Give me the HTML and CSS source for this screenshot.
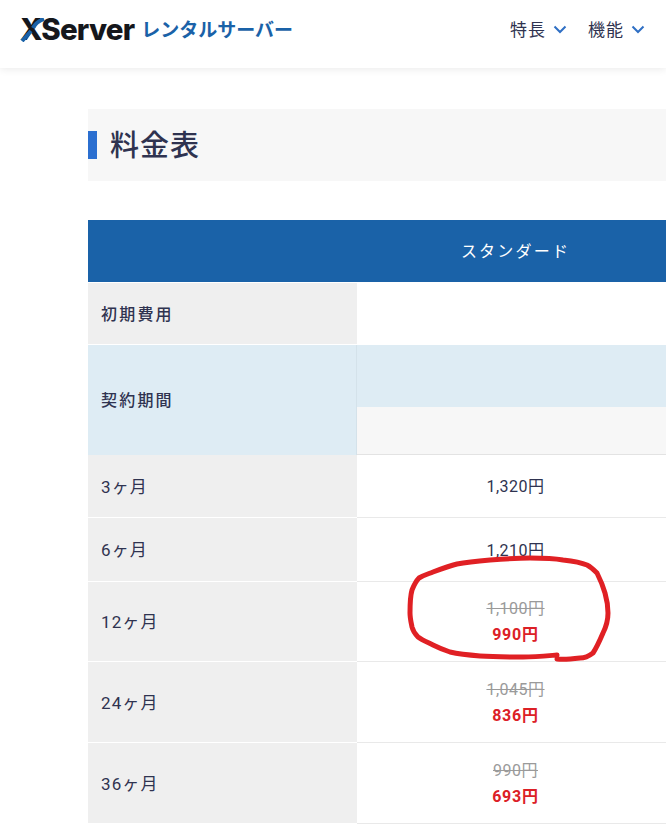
FILE: index.html
```
<!DOCTYPE html>
<html lang="ja">
<head>
<meta charset="utf-8">
<title>料金表</title>
<link rel="stylesheet" href="styles.css">
</head>
<body>
<header class="site-header">
  <a class="logo">
    <span class="logo-mark">XServer<svg class="logo-x" viewBox="0 0 24 24" aria-hidden="true"><path d="M1 23 L10 13" /><path d="M12 10 Q15 4 23 1" /></svg></span>
    <span class="logo-sub">レンタルサーバー</span>
  </a>
  <nav class="nav">
    <span class="nav-item">特長<svg class="chev" viewBox="0 0 14 9" aria-hidden="true"><path d="M1.5 1.5 L7 7 L12.5 1.5"/></svg></span>
    <span class="nav-item">機能<svg class="chev" viewBox="0 0 14 9" aria-hidden="true"><path d="M1.5 1.5 L7 7 L12.5 1.5"/></svg></span>
  </nav>
</header>
<main class="content">
  <h1 class="title">料金表</h1>
  <div class="table">
    <div class="thead"><span class="thead-blank"></span><span class="thead-cell">スタンダード</span></div>
    <div class="row row-fee"><div class="label strong">初期費用</div><div class="cell"></div></div>
    <div class="row row-term">
      <div class="label strong label-term">契約期間</div>
      <div class="term-cell"><div class="term-top"></div><div class="term-bottom"></div></div>
    </div>
    <div class="row row-one"><div class="label">3ヶ月</div><div class="cell">1,320円</div></div>
    <div class="row row-one"><div class="label">6ヶ月</div><div class="cell">1,210円</div></div>
    <div class="row row-two"><div class="label">12ヶ月</div><div class="cell"><s class="old">1,100円</s><b class="new">990円</b></div></div>
    <div class="row row-two"><div class="label">24ヶ月</div><div class="cell"><s class="old">1,045円</s><b class="new">836円</b></div></div>
    <div class="row row-two"><div class="label">36ヶ月</div><div class="cell"><s class="old">990円</s><b class="new">693円</b></div></div>
  </div>
</main>
<svg class="scribble" viewBox="0 0 666 833" aria-hidden="true"><path d="M557 655 C545 656 535 657 523 657 C508 657 494 657 480 656 C468 655 459 654 450 652 C444 650 439 648 433 645 C427 642 422 640 418 637 C415 634 413 631 412 627 C411 622 410 618 410 613 C410 605 410 597 412 590 C414 585 416 581 419 578 C424 575 428 574 433 572 C441 569 449 566 457 564 C468 562 479 561 490 560 C503 559 517 558 530 558 C541 558 552 558 563 560 C572 561 580 562 587 565 C591 567 594 570 597 573 C600 579 603 586 605 593 C607 600 608 606 608 613 C608 620 606 627 603 633 C600 640 597 647 593 653 C589 656 585 658 580 658 C572 659 564 660 557 659"/></svg>
</body>
</html>
```
FILE: styles.css
```
* { box-sizing: border-box; }
html, body { margin: 0; padding: 0; }
body {
  width: 666px;
  height: 833px;
  overflow: hidden;
  position: relative;
  background: #fff;
  color: #2f3350;
  font-family: Roboto, "Noto Sans CJK JP", sans-serif;
}
.site-header {
  height: 68px;
  display: flex;
  align-items: center;
  justify-content: space-between;
  padding: 0 21px 10px 20px;
  background: #fff;
  box-shadow: 0 1px 8px rgba(0, 0, 0, .09);
}
.logo { display: flex; align-items: center; gap: 7px; }
.logo-mark {
  position: relative;
  font-family: Inter, "Liberation Sans", sans-serif;
  font-weight: 800;
  font-size: 29.5px;
  letter-spacing: -.8px;
  line-height: 30px;
  color: #15171c;
}
.logo-x {
  position: absolute;
  left: 0;
  top: 4px;
  width: 26px;
  height: 24px;
  fill: none;
  stroke: #1a62a8;
  stroke-width: 4;
}
.logo-sub {
  font-family: "Noto Sans CJK JP", sans-serif;
  font-weight: 700;
  font-size: 19px;
  letter-spacing: 0;
  line-height: 30px;
  color: #1a62a8;
}
.nav { display: flex; gap: 21px; }
.nav-item {
  display: flex;
  align-items: center;
  gap: 7px;
  font-size: 17px;
  letter-spacing: 1px;
  font-family: "Noto Sans CJK JP", sans-serif;
  line-height: 24px;
}
.chev {
  width: 14px;
  height: 9px;
  fill: none;
  stroke: #2f6fc4;
  stroke-width: 2;
}
.content { padding: 41px 0 0 88px; width: 666px; }
.title {
  margin: 0 0 39px;
  height: 72px;
  display: flex;
  align-items: center;
  padding: 0 0 4px 22px;
  background: #f7f7f7;
  position: relative;
  font-family: "Noto Sans CJK JP", sans-serif;
  font-weight: 500;
  font-size: 29px;
  letter-spacing: 1px;
  color: #2f3350;
}
.title::before {
  content: "";
  position: absolute;
  left: 0;
  top: 22px;
  width: 9px;
  height: 28px;
  background: #2b6fd0;
}
.table { width: 100%; font-size: 16px; letter-spacing: .5px; }
.thead {
  display: flex;
  height: 62px;
  align-items: center;
  background: #1a62a8;
  color: #fff;
}
.thead-blank { width: 269px; }
.thead-cell {
  flex: 1;
  text-align: center;
  font-family: "Noto Sans CJK JP", sans-serif;
  font-size: 16px;
  letter-spacing: 2.2px;
  padding: 0 0 2px 8px;
}
.row { display: flex; }
.row-fee { height: 63px; padding-top: 1px; }
.row-term { height: 110px; }
.row-one { height: 63px; }
.row-one + .row-one { height: 64px; }
.row-two { height: 80px; }
.row-two + .row-two { height: 81px; }
.label {
  width: 269px;
  padding: 0 0 2px 13px;
  display: flex;
  align-items: center;
  background: #efefef;
  border-bottom: 1px solid #fff;
  font-size: 17px;
  letter-spacing: 1.1px;
}
.strong {
  font-weight: 500;
  font-family: "Noto Sans CJK JP", sans-serif;
  font-size: 16px;
  letter-spacing: 2.2px;
}
.label-term { background: #deecf4; border-bottom: 0; border-right: 1px solid #d4e2ea; padding-bottom: 3px; }
.cell {
  flex: 1;
  display: flex;
  flex-direction: column;
  align-items: center;
  justify-content: center;
  gap: 8px;
  border-bottom: 1px solid #e9e9e9;
  padding: 0 0 2px 8px;
}
.row-two .cell { padding: 1px 0 0 8px; }
.row-fee .cell { border-bottom: 0; }
.term-cell { flex: 1; display: flex; flex-direction: column; }
.term-top { height: 62px; background: #deecf4; }
.term-bottom { flex: 1; background: #f7f7f7; border-bottom: 1px solid #e3e3e3; }
.old { color: #9a9a9a; line-height: 18px; }
.new { color: #dc2026; line-height: 18px; font-weight: 700; letter-spacing: .8px; }
.scribble {
  position: absolute;
  left: 0;
  top: 0;
  width: 666px;
  height: 833px;
  fill: none;
  stroke: #e02024;
  stroke-width: 5;
  stroke-linecap: round;
  stroke-linejoin: round;
}
```
